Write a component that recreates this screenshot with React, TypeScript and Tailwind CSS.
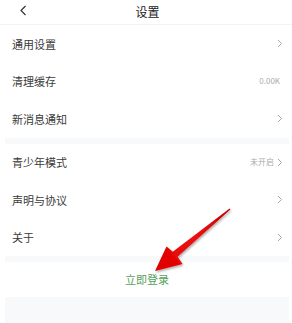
import React from 'react'

const font = { fontFamily: '"Noto Sans CJK SC", "Noto Sans", sans-serif' }

function Chevron() {
  return (
    <svg width="6" height="9" viewBox="0 0 6 9" className="text-[#aaa]">
      <path d="M1 1l3.5 3.5L1 8" fill="none" stroke="currentColor" strokeWidth="1" />
    </svg>
  )
}

function Row({ label, value, arrow = true }: { label: string; value?: string; arrow?: boolean }) {
  return (
    <div className="flex items-center h-[37.5px] pl-[7px] pr-[6px]">
      <span className="flex-1 text-[11px] text-[#3a3a3a]">{label}</span>
      {value && <span className="text-[8px] text-[#aaa] mr-[3px]">{value}</span>}
      {arrow && <Chevron />}
    </div>
  )
}

export default function App() {
  return (
    <div className="relative w-[292px] h-[323px] bg-white overflow-hidden" style={font}>
      <div className="relative flex items-center justify-center h-[25px] border-b border-[#f3f3f3]">
        <svg className="absolute left-[19px] top-[5px]" width="9" height="11" viewBox="0 0 9 11">
          <path d="M6.5 1L2 5.5 6.5 10" fill="none" stroke="#333" strokeWidth="1.2" />
        </svg>
        <span className="text-[12px] text-[#222] ml-[3px]">设置</span>
      </div>
      <div className="pl-[5px] pr-[3px]">
        <Row label="通用设置" />
        <Row label="清理缓存" value="0.00K" arrow={false} />
        <Row label="新消息通知" />
        <div className="h-[6px] bg-[#f8f9fb]" />
        <Row label="青少年模式" value="未开启" />
        <Row label="声明与协议" />
        <Row label="关于" />
        <div className="h-[6px] bg-[#f8f9fb]" />
        <div className="flex items-center justify-center h-[35px] text-[11px] text-[#55a05a]">立即登录</div>
        <div className="h-[30px] bg-[#f8f9fb]" />
      </div>
      <svg className="absolute left-0 top-0 pointer-events-none" width="292" height="323">
        <defs>
          <linearGradient id="arrowGrad" x1="230" y1="209" x2="160" y2="268" gradientUnits="userSpaceOnUse">
            <stop offset="0" stopColor="#c00000" />
            <stop offset="0.5" stopColor="#ee1010" />
            <stop offset="1" stopColor="#e00000" />
          </linearGradient>
          <filter id="arrowShadow" x="-20%" y="-20%" width="140%" height="140%">
            <feDropShadow dx="1" dy="1.5" stdDeviation="1.2" floodColor="#000" floodOpacity="0.35" />
          </filter>
        </defs>
        <polygon
          points="230.4,209.5 177.5,256.8 182.5,264 155,271 166.5,246.5 172.8,251.8 229.6,208.5"
          fill="url(#arrowGrad)"
          filter="url(#arrowShadow)"
        />
      </svg>
    </div>
  )
}
